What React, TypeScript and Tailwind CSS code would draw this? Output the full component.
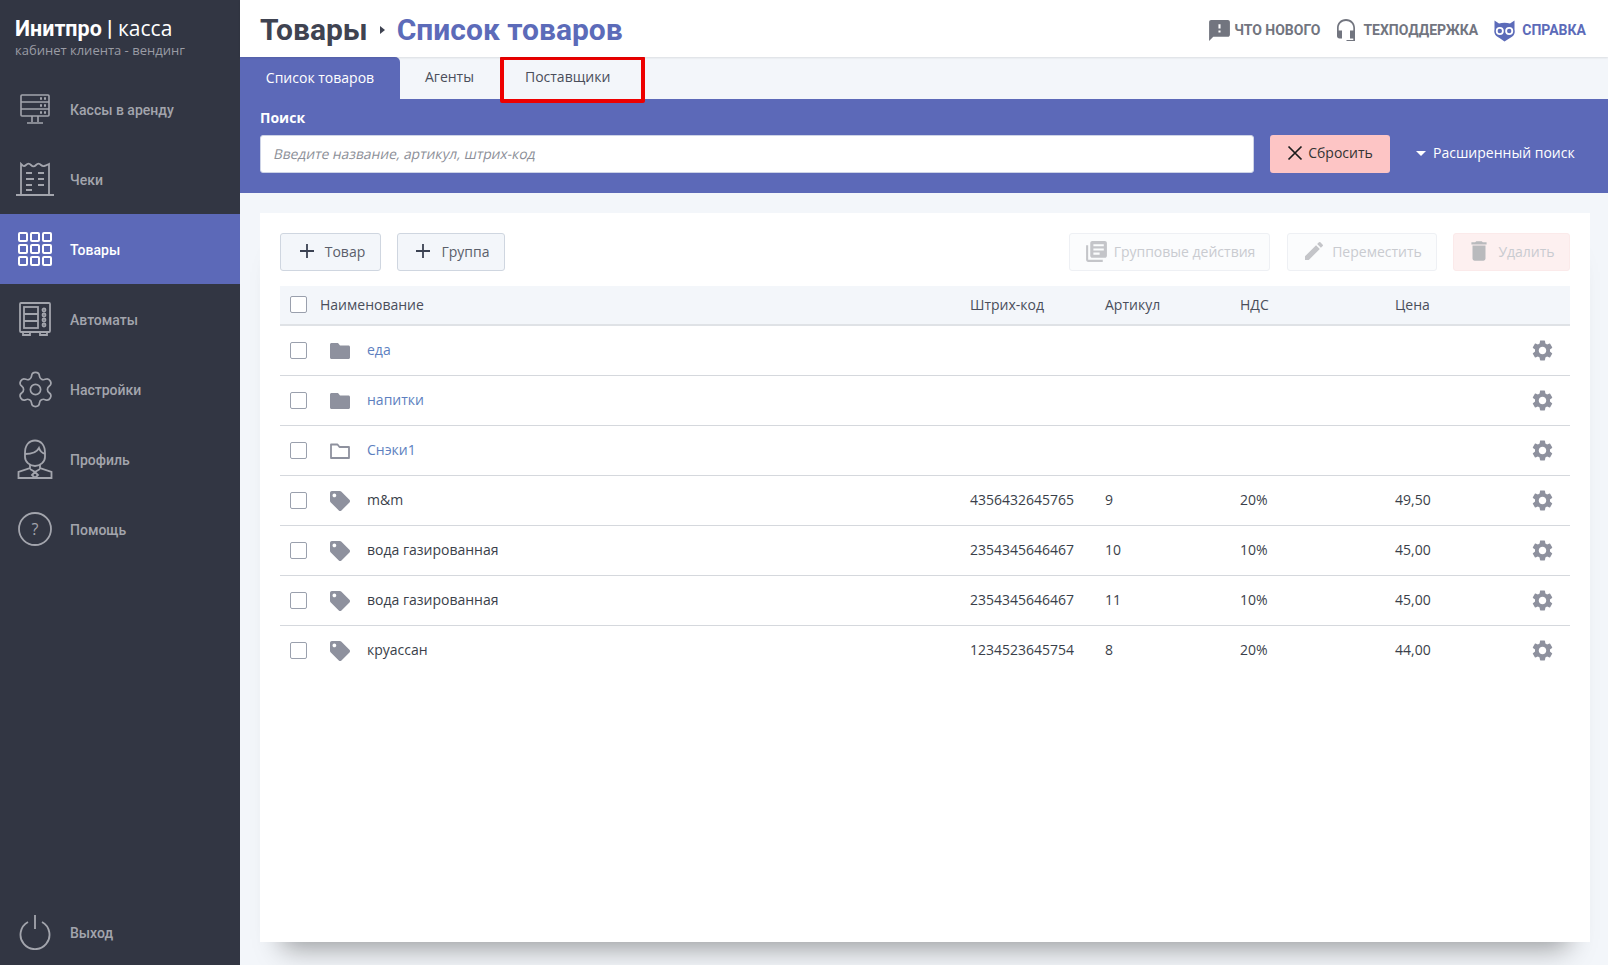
import React from "react";
import { MdSettings, MdFeedback, MdEdit, MdDelete, MdLibraryBooks } from "react-icons/md";
import { FaTag } from "react-icons/fa";
import { Settings } from "lucide-react";

const S = { fill: "none", stroke: "currentColor", strokeWidth: 1.6 } as const;

function IconKassa() {
  return (
    <svg width="32" height="32" viewBox="0 0 32 32" {...S}>
      <rect x="2" y="2" width="28" height="21" rx="1" />
      <path d="M2 9h28M2 16h28M13 23v6M19 23v6M8 30h16" />
      <path d="M21 5.500h2M25 5.500h2M21 12.500h2M25 12.500h2M21 19.500h2M25 19.500h2" strokeWidth="2.400" />
    </svg>
  );
}
function IconCheck() {
  return (
    <svg width="38" height="36" viewBox="0 0 38 36" {...S} strokeWidth="1.8">
      <path d="M0 34h38M5 34V3c2 2 3 3 5 1s3-2 5 0 3 2 5 0 3-2 5 0 4 1 8-1v31" />
      <path d="M10 12h6M22 12h6M10 18h8M22 18h6M10 24h6M22 24h6M10 29h6" strokeWidth="1.800" />
    </svg>
  );
}
function IconGrid() {
  const cells = [];
  for (let r = 0; r < 3; r++) for (let c = 0; c < 3; c++) cells.push(<rect key={`${r}${c}`} x={1 + c * 12} y={1 + r * 12} width="8" height="8" rx="1" />);
  return <svg width="34" height="34" viewBox="0 0 34 34" fill="none" stroke="currentColor" strokeWidth="2">{cells}</svg>;
}
function IconVending() {
  return (
    <svg width="32" height="34" viewBox="0 0 32 34" {...S} strokeWidth="1.800">
      <rect x="1" y="1" width="30" height="29" rx="1" />
      <rect x="5" y="5" width="14" height="21" />
      <path d="M5 12h14M5 19h14M4 30v3h7v-3M21 30v3h7v-3" />
      <circle cx="25" cy="8" r="1.500" /><circle cx="25" cy="13" r="1.500" /><circle cx="25" cy="18" r="1.500" /><circle cx="25" cy="23" r="1.500" />
    </svg>
  );
}
function IconUser() {
  return (
    <svg width="36" height="40" viewBox="0 0 36 40" {...S} strokeWidth="1.800">
      <path d="M8 14C8 6 12 1.500 18 1.500S28 6 28 14v4c0 5-5 9-10 9s-10-4-10-9z" />
      <path d="M8 15c6 0 12-2 14-6 1 3 3 5 6 6" />
      <path d="M13 26v3L1.500 33v6h33v-6L23 29v-3" />
      <path d="M13 30l5 3 5-3M18 33l-3 3 3 3 3-3z" />
    </svg>
  );
}
function IconHelp() {
  return (
    <svg width="34" height="34" viewBox="0 0 34 34" fill="none" stroke="currentColor" strokeWidth="1.800">
      <circle cx="17" cy="17" r="16" />
      <text x="17" y="22.500" textAnchor="middle" fontSize="16" fill="currentColor" stroke="none" fontFamily="'Open Sans', sans-serif">?</text>
    </svg>
  );
}
function IconPower() {
  return (
    <svg width="32" height="36" viewBox="0 0 32 36" fill="none" stroke="currentColor" strokeWidth="1.800">
      <path d="M16 1v14M9 8a14.500 14.500 0 1 0 14 0" />
    </svg>
  );
}
function IconHeadset() {
  return (
    <svg width="20" height="23" viewBox="0 0 20 23" fill="currentColor">
      <path d="M10 0C4.500 0 1 4 1 9v8c0 1.400 1 2.500 2.500 2.500H6v-8H2.700V9C2.700 5 5.800 2 10 2s7.300 3 7.300 7v2.500H14v8h3.300v1.400H10.500V22h8.500v-13c0-5-3.500-9-9-9z" />
    </svg>
  );
}
function IconOwl() {
  return (
    <svg width="23" height="22" viewBox="0 0 23 22">
      <path d="M1.500 0.500l4.500 3c3.500-1 7.500-1 11 0l4.500-3v9c1 4-1 7-4.500 8.500L11.500 21.500 6.500 18C3 16.500 .5 13.500 1.500 9.500z" fill="#5c6bb9" />
      <circle cx="6.800" cy="11" r="4" fill="#fff" /><circle cx="16.200" cy="11" r="4" fill="#fff" />
      <circle cx="6.800" cy="11" r="2.200" fill="#5c6bb9" /><circle cx="16.200" cy="11" r="2.200" fill="#5c6bb9" />
    </svg>
  );
}
function IconPlus() {
  return <svg width="16" height="16" viewBox="0 0 16 16" stroke="#3b4252" strokeWidth="1.800"><path d="M8 1v14M1 8h14" /></svg>;
}
function IconX() {
  return <svg width="16" height="16" viewBox="0 0 16 16" stroke="#1c1c1c" strokeWidth="1.700"><path d="M1.500 1.500l13 13M14.500 1.500l-13 13" /></svg>;
}
function IconFolderLine() {
  return (
    <svg width="20" height="16" viewBox="0 0 20 16" fill="none" stroke="#8e919e" strokeWidth="1.800">
      <path d="M1 1.500h6.500l2 2.500H19v11H1z" strokeLinejoin="round" />
    </svg>
  );
}
function IconFolderFill() {
  return (
    <svg width="20" height="16" viewBox="0 0 20 16" fill="#8e919e">
      <path d="M1.500 0H8l2 2.500h8.500c.8 0 1.500.6 1.500 1.500v10.500c0 .8-.7 1.500-1.500 1.500h-17C.7 16 0 15.300 0 14.500v-13C0 .6.700 0 1.500 0z" />
    </svg>
  );
}

const NAV: [string, React.ReactNode, boolean][] = [
  ["Кассы в аренду", <IconKassa />, false],
  ["Чеки", <IconCheck />, false],
  ["Товары", <IconGrid />, true],
  ["Автоматы", <IconVending />, false],
  ["Настройки", <Settings size={41} strokeWidth={1} />, false],
  ["Профиль", <IconUser />, false],
  ["Помощь", <IconHelp />, false],
];

function NavItem({ label, icon, active }: { label: string; icon: React.ReactNode; active?: boolean }) {
  return (
    <div className={`flex h-[70px] items-center ${active ? "bg-[#5c69b8] text-white" : "text-[#a3a5ad]"}`}>
      <div className="flex w-[70px] justify-center">{icon}</div>
      <span className="pt-[3px] font-['Roboto',sans-serif] text-[14px] font-medium">{label}</span>
    </div>
  );
}

function Check() {
  return <div className="h-[17px] w-[17px] rounded-[2px] border border-[#9aa0ad] bg-white" />;
}

type Row = { kind: "full" | "line" | "tag"; name: string; code?: string; art?: string; vat?: string; price?: string };
const ROWS: Row[] = [
  { kind: "full", name: "еда" },
  { kind: "full", name: "напитки" },
  { kind: "line", name: "Снэки1" },
  { kind: "tag", name: "m&m", code: "4356432645765", art: "9", vat: "20%", price: "49,50" },
  { kind: "tag", name: "вода газированная", code: "2354345646467", art: "10", vat: "10%", price: "45,00" },
  { kind: "tag", name: "вода газированная", code: "2354345646467", art: "11", vat: "10%", price: "45,00" },
  { kind: "tag", name: "круассан", code: "1234523645754", art: "8", vat: "20%", price: "44,00" },
];

const GRID = "grid grid-cols-[690px_135px_135px_155px_1fr_56px] items-center";

export default function App() {
  return (
    <div className="flex h-[965px] w-[1608px] overflow-hidden bg-[#f3f6fa] font-['Open_Sans',sans-serif] text-[14px] text-[#3a3f4a]">
      <aside className="flex w-[240px] shrink-0 flex-col bg-[#323643]">
        <div className="h-[74px] pl-[15px] pt-[16px]">
          <div className="text-[21px] leading-[24px] text-white">
            <span className="font-['Roboto',sans-serif] text-[21.500px] font-bold">Инитпро |</span> <span>касса</span>
          </div>
          <div className="-mt-[1px] text-[13px] leading-[20px] text-[#9a9ca5]">кабинет клиента - вендинг</div>
        </div>
        {NAV.map(([l, i, a]) => (
          <NavItem key={l} label={l} icon={i} active={a} />
        ))}
        <div className="mt-auto -mb-[2px]">
          <NavItem label="Выход" icon={<IconPower />} />
        </div>
      </aside>

      <main className="flex min-w-0 flex-1 flex-col">
        <header className="relative z-10 flex h-[57px] shrink-0 items-center justify-between bg-white pl-[20px] pr-[22px] pt-[2px] shadow-[0_1px_2px_rgba(0,0,0,0.1)]">
          <div className="flex items-center font-['Roboto',sans-serif] text-[30px] font-bold">
            <span className="text-[#3f4351]">Товары</span>
            <span className="ml-[12px] mr-[12px] h-0 w-0 border-y-[4px] border-l-[5px] border-y-transparent border-l-[#3f4351]" />
            <span className="text-[#5c6bb9]">Список товаров</span>
          </div>
          <div className="flex items-center pt-[2px] font-['Roboto',sans-serif] text-[14px] font-bold">
            <div className="flex items-center text-[#72757f]">
              <MdFeedback size={25} className="mr-[2px]" />
              <span>ЧТО НОВОГО</span>
            </div>
            <div className="ml-[16px] flex items-center text-[#72757f]">
              <IconHeadset />
              <span className="ml-[7px]">ТЕХПОДДЕРЖКА</span>
            </div>
            <div className="ml-[15px] flex items-center text-[#5c6bb9]">
              <IconOwl />
              <span className="ml-[6px]">СПРАВКА</span>
            </div>
          </div>
        </header>

        <div className="relative flex h-[42px] shrink-0 items-stretch text-[14px]">
          <div className="flex w-[160px] items-center justify-center rounded-tr-[5px] bg-[#5c69b8] pb-[2px] text-white">Список товаров</div>
          <div className="flex items-center px-[25px] pb-[4px] text-[#4a4e5a]">Агенты</div>
          <div className="ml-[1px] flex items-center px-[25px] pb-[4px] text-[#4a4e5a]">Поставщики</div>
          <div className="absolute left-[260px] -top-[1px] h-[47px] w-[145px] rounded-[2px] border-[4px] border-[#ee0000]" />
        </div>

        <section className="h-[94px] shrink-0 bg-[#5c69b8] px-[20px] pt-[9px]">
          <div className="text-[14px] font-bold leading-[20px] text-white">Поиск</div>
          <div className="mt-[7px] flex items-center">
            <div className="flex h-[38px] w-[994px] items-center rounded-[3px] border border-[#cdd3e6] bg-white pl-[13px] text-[13.800px] text-[#8c8f98]">
              <span className="inline-block -skew-x-12">Введите название, артикул, штрих-код</span>
            </div>
            <div className="ml-[16px] flex h-[38px] w-[120px] items-center justify-center rounded-[3px] bg-[#fdc5c5] pb-[3px] text-[14px] text-[#333]">
              <IconX />
              <span className="ml-[5px]">Сбросить</span>
            </div>
            <div className="ml-[26px] flex items-center pb-[3px] text-[14px] text-white">
              <span className="mr-[7px] mt-[2px] h-0 w-0 border-x-[5px] border-t-[5px] border-x-transparent border-t-white" />
              Расширенный поиск
            </div>
          </div>
        </section>

        <div className="pb-[23px] pl-[20px] pr-[18px] pt-[20px]">
          <div className="h-[729px] bg-white px-[20px] pt-[20px] shadow-[0_28px_26px_-22px_rgba(0,0,0,0.38)]">
            <div className="flex h-[38px] items-stretch text-[14px]">
              <div className="flex w-[101px] items-center justify-center rounded-[3px] border border-[#cfd6e0] bg-[#f3f6fa] pb-[2px] pl-[3px] text-[#5a5e6a]">
                <IconPlus />
                <span className="ml-[10px]">Товар</span>
              </div>
              <div className="ml-[16px] flex w-[108px] items-center justify-center rounded-[3px] border border-[#cfd6e0] bg-[#f3f6fa] pb-[2px] pl-[3px] text-[#5a5e6a]">
                <IconPlus />
                <span className="ml-[10px]">Группа</span>
              </div>
              <div className="ml-auto flex w-[201px] items-center justify-center rounded-[3px] border border-[#eef0f4] bg-[#fbfcfd] pb-[2px] text-[#c9cbd0]">
                <MdLibraryBooks size={25} className="text-[#c4c5c9]" />
                <span className="ml-[5px]">Групповые действия</span>
              </div>
              <div className="ml-[17px] flex w-[150px] items-center justify-center rounded-[3px] border border-[#eef0f4] bg-[#fbfcfd] pb-[2px] text-[#c9cbd0]">
                <MdEdit size={24} className="text-[#c4c5c9]" />
                <span className="ml-[6px]">Переместить</span>
              </div>
              <div className="ml-[16px] flex w-[117px] items-center justify-center rounded-[3px] border border-[#fbeaea] bg-[#fdf0f0] pb-[2px] pr-[2px] text-[#c9cbd0]">
                <MdDelete size={26} className="text-[#b9babd]" />
                <span className="ml-[6px]">Удалить</span>
              </div>
            </div>

            <div className={`${GRID} mt-[15px] h-[40px] border-b-2 border-[#dfe2e6] bg-[#f3f6fa] pb-[2px] text-[#4a4e5a]`}>
              <div className="flex items-center pl-[10px]">
                <Check />
                <span className="ml-[13px]">Наименование</span>
              </div>
              <div>Штрих-код</div>
              <div>Артикул</div>
              <div>НДС</div>
              <div>Цена</div>
              <div />
            </div>
            {ROWS.map((r, i) => (
              <div key={i} className={`${GRID} h-[50px] border-b ${i < ROWS.length - 1 ? "border-[#d5d8dd]" : "border-transparent"} text-[#3a3f4a]`}>
                <div className="flex items-center pl-[10px]">
                  <Check />
                  <div className="ml-[23px] flex w-[20px] justify-center">
                    {r.kind === "full" && <IconFolderFill />}
                    {r.kind === "line" && <IconFolderLine />}
                    {r.kind === "tag" && <FaTag size={20} className="text-[#8e919e]" />}
                  </div>
                  <span className={`ml-[17px] pb-[2px] ${r.kind === "tag" ? "" : "text-[#5d7fc0]"}`}>{r.name}</span>
                </div>
                <div className="pb-[2px]">{r.code}</div>
                <div className="pb-[2px]">{r.art}</div>
                <div className="pb-[2px]">{r.vat}</div>
                <div className="pb-[2px]">{r.price}</div>
                <div className="flex justify-center">
                  <MdSettings size={25} className="text-[#8e919e]" />
                </div>
              </div>
            ))}
          </div>
        </div>
      </main>
    </div>
  );
}
